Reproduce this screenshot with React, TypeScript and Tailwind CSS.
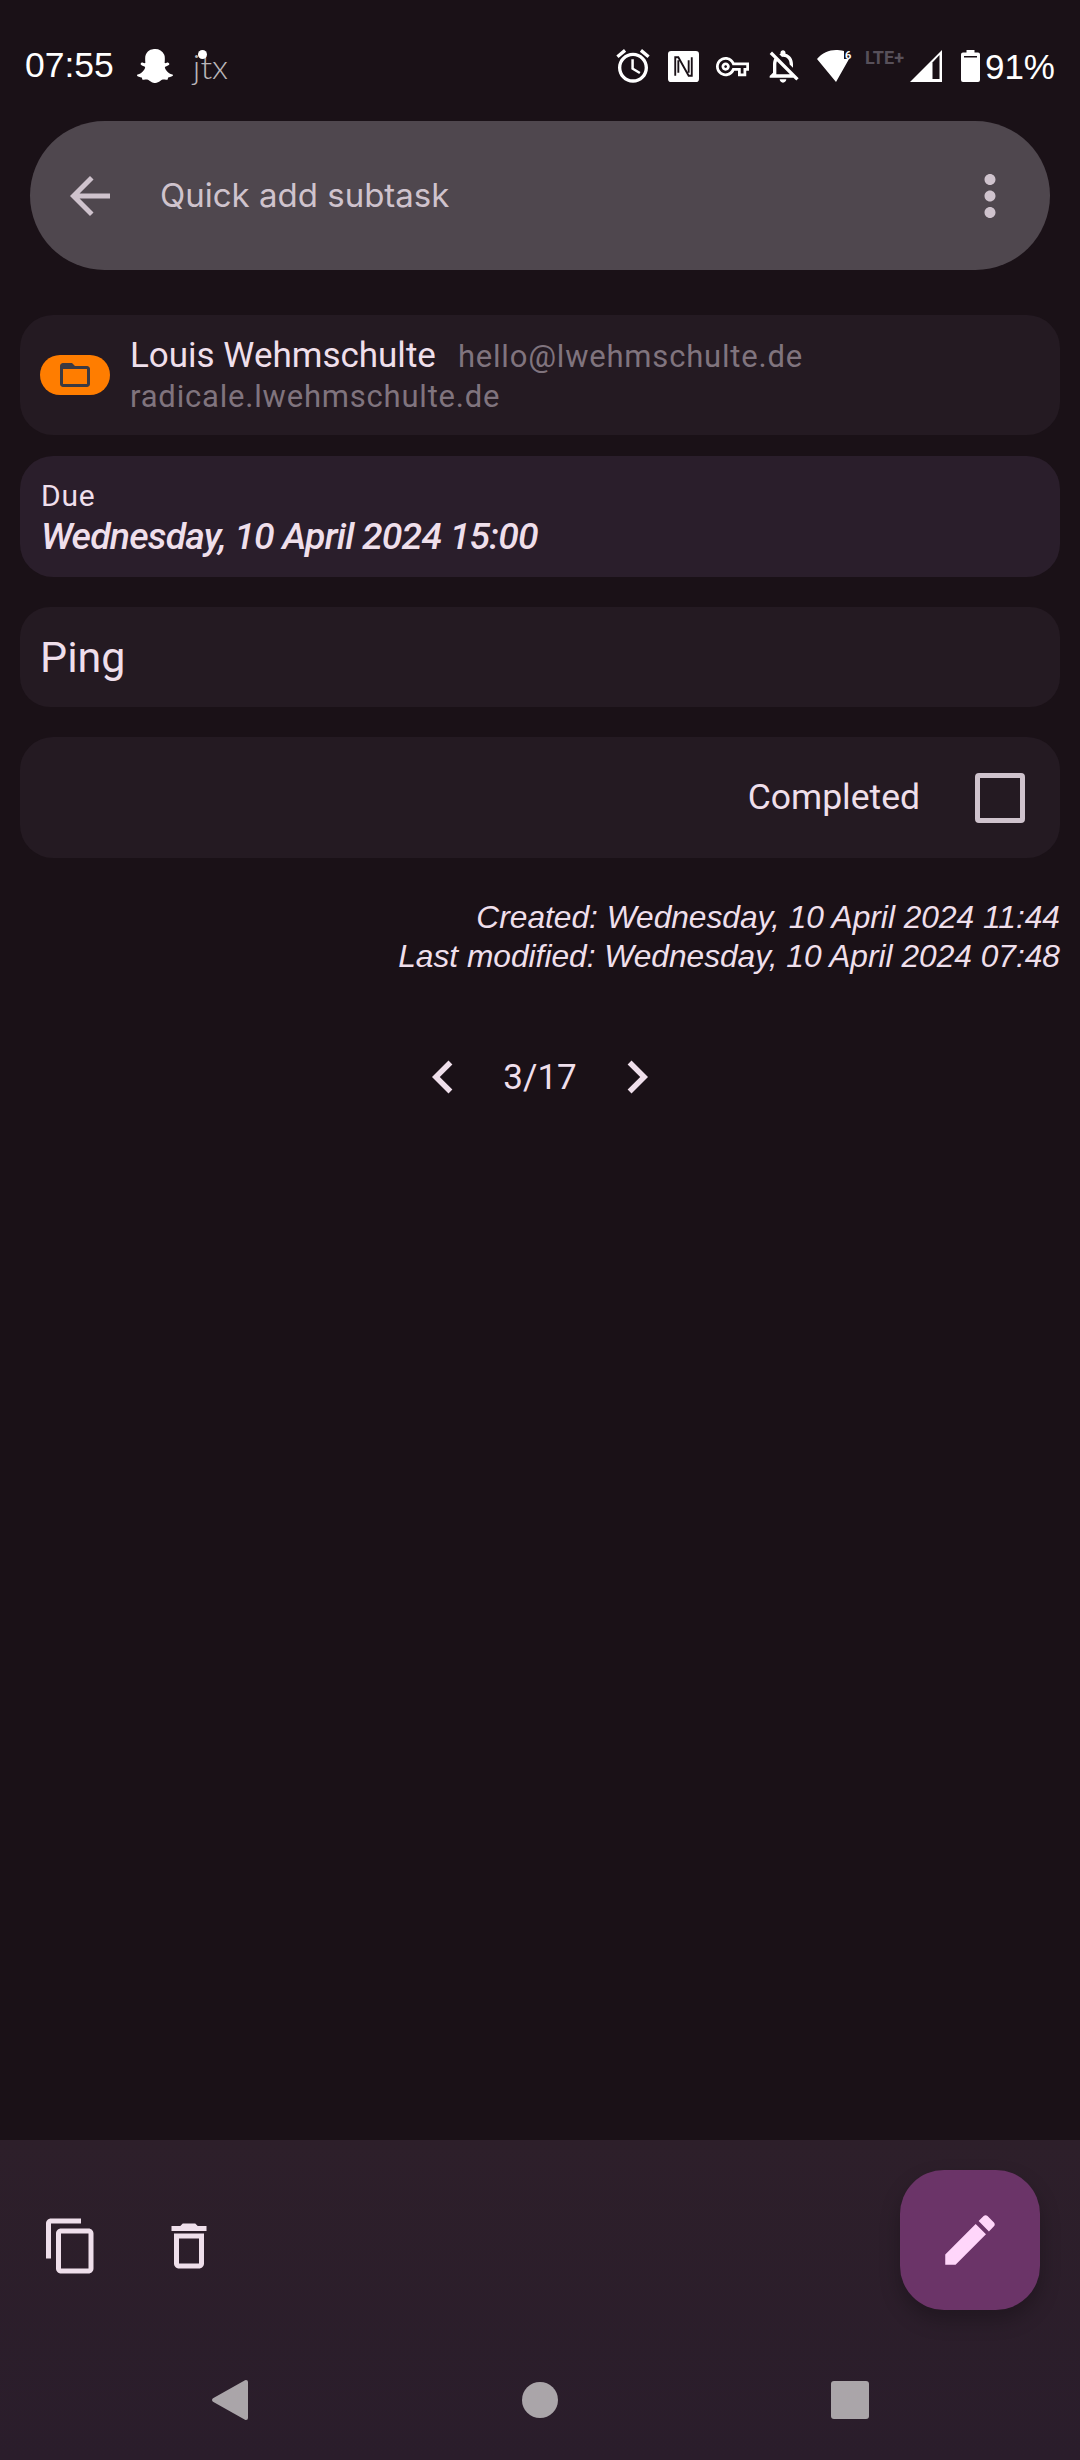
import { FaSnapchatGhost } from 'react-icons/fa';

const roboto = { fontFamily: 'Roboto, sans-serif' };

function Icon({ d, className }: { d: string; className: string }) {
    return (
        <svg viewBox="0 0 24 24" fill="currentColor" className={className}>
            <path d={d} />
        </svg>
    );
}

function StatusBar() {
    return (
        <div className="flex h-[121px] shrink-0 items-center pt-[11px] pl-[25px] pr-[25px] text-white font-['Liberation_Sans',sans-serif]">
            <span className="text-[35.5px] leading-none">07:55</span>
            <FaSnapchatGhost className="ml-[23px] h-[36px] w-[36px]" />
            <span className="relative ml-[20px] font-['Lato',sans-serif] text-[34px] font-light leading-none text-[#b9b5b8]">
                jtx
                <span className="absolute left-[5px] top-[1px] h-[9px] w-[9px] rounded-full bg-white" />
            </span>
            <div className="ml-auto flex items-center">
                <Icon
                    className="h-[40px] w-[40px]"
                    d="M22 5.720l-4.600-3.860-1.290 1.530 4.600 3.860L22 5.720zM7.880 3.390L6.600 1.860 2 5.710l1.290 1.530 4.590-3.850zM12.500 8H11v6l4.750 2.850.75-1.230-4-2.370V8zM12 4c-4.970 0-9 4.030-9 9s4.030 9 9 9 9-4.030 9-9-4.030-9-9-9zm0 16c-3.870 0-7-3.130-7-7s3.130-7 7-7 7 3.130 7 7-3.130 7-7 7z"
                />
                <svg viewBox="0 0 30 30" className="ml-[15px] h-[31px] w-[31px]">
                    <rect x="0" y="0" width="30" height="30" rx="3" fill="#fff" />
                    <path d="M7 24V6h3l10 18h3V6M10 9v12M20 9v12" fill="none" stroke="#1a1117" strokeWidth="1.800" />
                </svg>
                <Icon
                    className="ml-[17px] h-[33px] w-[33px]"
                    d="M22 19h-6v-4h-2.680c-1.140 2.420-3.600 4-6.320 4-3.860 0-7-3.140-7-7s3.140-7 7-7c2.720 0 5.170 1.580 6.320 4H24v6h-2v4zm-4-2h2v-4h2v-2H11.940l-.23-.67C11.010 8.340 9.110 7 7 7c-2.760 0-5 2.240-5 5s2.240 5 5 5c2.110 0 4.010-1.340 4.710-3.330l.23-.67H18v4zM7 15c-1.650 0-3-1.350-3-3s1.350-3 3-3 3 1.350 3 3-1.350 3-3 3zm0-4c-.55 0-1 .45-1 1s.45 1 1 1 1-.45 1-1-.45-1-1-1z"
                />
                <Icon
                    className="ml-[14px] h-[40px] w-[40px]"
                    d="M12 22c1.100 0 2-.9 2-2h-4c0 1.100.9 2 2 2zm0-15.500c2.490 0 4 2.020 4 4.500v.1l2 2V11c0-3.070-1.630-5.640-4.500-6.320V4c0-.83-.67-1.500-1.500-1.500s-1.500.67-1.500 1.500v.68c-.24.06-.47.15-.69.23l1.640 1.640c.18-.02.36-.05.55-.05zM5.410 3.350L4 4.760l2.810 2.810C6.290 8.570 6 9.740 6 11v5l-2 2v1h14.240l1.740 1.740 1.410-1.410L5.410 3.350zM16 17H8v-6c0-.68.12-1.320.34-1.900L16 16.760V17z"
                />
                <svg viewBox="0 0 40 34" className="ml-[14px] h-[34px] w-[40px]">
                    <path d="M0 10C5 4 12 1 19 1c2 0 5 .4 8 1v8h5L19 33z" fill="#fff" />
                    <text x="28" y="10" fontSize="11" fill="#fff" fontFamily="Roboto, sans-serif" fontWeight="700">
                        6
                    </text>
                </svg>
                <span className="mb-[16px] ml-[8px] font-['Roboto',sans-serif] text-[18px] font-bold leading-none text-[#57505a]">
                    LTE+
                </span>
                <svg viewBox="0 0 32 32" className="ml-[6px] h-[32px] w-[32px]">
                    <path d="M32 0v32H0z" fill="#fff" />
                    <path d="M22.500 12.500V29h7V5z" fill="#1a1117" />
                </svg>
                <svg viewBox="0 0 19 32" className="ml-[19px] h-[32px] w-[19px]">
                    <path d="M5.500 0h8v2.500H17a2 2 0 0 1 2 2V30a2 2 0 0 1-2 2H2a2 2 0 0 1-2-2V4.500a2 2 0 0 1 2-2h3.500z" fill="#fff" />
                    <rect x="3" y="6" width="13" height="1.500" fill="#1a1117" />
                </svg>
                <span className="ml-[5px] text-[35px] leading-none">91%</span>
            </div>
        </div>
    );
}

function SearchBar() {
    return (
        <div className="mx-[30px] flex h-[149px] shrink-0 items-center rounded-full bg-[#4f474e] pl-[30px] pr-[27px] text-[#cfc3cd]">
            <Icon className="h-[60px] w-[60px]" d="M20 11H7.830l5.590-5.590L12 4l-8 8 8 8 1.410-1.410L7.830 13H20v-2z" />
            <span className="ml-[40px] font-['Inter',sans-serif] text-[33px] leading-none">Quick add subtask</span>
            <Icon
                className="ml-auto h-[66px] w-[66px]"
                d="M12 8c1.100 0 2-.9 2-2s-.9-2-2-2-2 .9-2 2 .9 2 2 2zm0 2c-1.100 0-2 .9-2 2s.9 2 2 2 2-.9 2-2-.9-2-2-2zm0 6c-1.100 0-2 .9-2 2s.9 2 2 2 2-.9 2-2-.9-2-2-2z"
            />
        </div>
    );
}

function BottomBar() {
    return (
        <div className="mt-auto h-[320px] shrink-0 bg-gradient-to-b from-[#2d1f2a] to-[#2a1d2b] text-[#efdfeb]">
            <div className="flex h-[240px] items-start pl-[41px] pr-[40px] pt-[30px]">
                <Icon
                    className="mt-[46px] h-[60px] w-[60px]"
                    d="M16 1H4c-1.100 0-2 .9-2 2v14h2V3h12V1zm3 4H8c-1.100 0-2 .9-2 2v14c0 1.100.9 2 2 2h11c1.100 0 2-.9 2-2V7c0-1.100-.9-2-2-2zm0 16H8V7h11v14z"
                />
                <Icon
                    className="ml-[58px] mt-[46px] h-[60px] w-[60px]"
                    d="M16 9v10H8V9h8m-1.500-6h-5l-1 1H5v2h14V4h-3.500l-1-1zM18 7H6v12c0 1.100.9 2 2 2h8c1.100 0 2-.9 2-2V7z"
                />
                <div className="ml-auto flex h-[140px] w-[140px] items-center justify-center rounded-[44px] bg-[#6b3468] text-[#ffd6fa] shadow-[0_10px_20px_rgba(0,0,0,0.25)]">
                    <Icon
                        className="h-[66px] w-[66px]"
                        d="M3 17.250V21h3.750L17.810 9.940l-3.750-3.750L3 17.250zM20.710 7.040c.39-.39.39-1.020 0-1.410l-2.340-2.340c-.39-.39-1.020-.39-1.410 0l-1.830 1.830 3.750 3.750 1.830-1.830z"
                    />
                </div>
            </div>
            <div className="flex h-[40px] items-center pl-[75px]">
                <div className="flex w-[309px] justify-center">
                    <svg viewBox="0 0 36 40" className="h-[40px] w-[36px]">
                        <path d="M34 0a2 2 0 0 1 2 2v36a2 2 0 0 1-2 2 2 2 0 0 1-1-.3L1 21.700a2 2 0 0 1 0-3.400L33 .3A2 2 0 0 1 34 0z" fill="#aaa5a9" />
                    </svg>
                </div>
                <div className="flex w-[311px] justify-center">
                    <div className="h-[36px] w-[36px] rounded-full bg-[#aaa5a9]" />
                </div>
                <div className="flex w-[309px] justify-center">
                    <div className="h-[38px] w-[38px] rounded-[3px] bg-[#aaa5a9]" />
                </div>
            </div>
        </div>
    );
}

export default function App() {
    return (
        <div className="flex h-[2460px] w-[1080px] flex-col overflow-hidden bg-[#1a1117] text-[#efdfeb]" style={roboto}>
            <StatusBar />
            <SearchBar />

            <div className="mx-[20px] mt-[45px] flex h-[120px] shrink-0 items-center rounded-[33px] bg-[#241a22] pl-[20px]">
                <div className="flex h-[40px] w-[70px] items-center justify-center rounded-[20px] bg-[#ff7d00] text-[#3b3a42]">
                    <Icon
                        className="h-[36px] w-[36px]"
                        d="M20 6h-8l-2-2H4c-1.100 0-1.990.9-1.990 2L2 18c0 1.100.9 2 2 2h16c1.100 0 2-.9 2-2V8c0-1.100-.9-2-2-2zm0 12H4V8h16v10z"
                    />
                </div>
                <div className="ml-[20px] flex flex-col">
                    <div className="flex items-baseline">
                        <span className="text-[35px] leading-[42px]">Louis Wehmschulte</span>
                        <span className="ml-[22px] text-[31px] leading-[42px] tracking-[0.8px] text-[#80747e]">hello@lwehmschulte.de</span>
                    </div>
                    <span className="text-[31px] leading-[38px] tracking-[0.8px] text-[#80747e]">radicale.lwehmschulte.de</span>
                </div>
            </div>

            <div className="mx-[20px] mt-[21px] flex h-[121px] shrink-0 flex-col justify-center rounded-[33px] bg-[#2a1e2b] pl-[21px]">
                <span className="text-[30px] leading-[38px] tracking-[0.8px]">Due</span>
                <span className="text-[37.4px] font-medium italic leading-[42px] tracking-[-0.8px]">Wednesday, 10 April 2024 15:00</span>
            </div>

            <div className="mx-[20px] mt-[30px] flex h-[100px] shrink-0 items-center rounded-[30px] bg-[#241a22] pl-[20px]">
                <span className="text-[43px] leading-none">Ping</span>
            </div>

            <div className="mx-[20px] mt-[30px] flex h-[121px] shrink-0 items-center justify-end rounded-[33px] bg-[#241a22] pr-[35px]">
                <span className="text-[35.5px] leading-none">Completed</span>
                <div className="ml-[55px] h-[50px] w-[50px] rounded-[4px] border-[5px] border-[#cfc3cd]" />
            </div>

            <div className="mx-[20px] mt-[40px] flex flex-col items-end font-['Liberation_Sans',sans-serif] text-[31.7px] italic leading-[39px]">
                <span>Created: Wednesday, 10 April 2024 11:44</span>
                <span>Last modified: Wednesday, 10 April 2024 07:48</span>
            </div>

            <div className="mt-[68px] flex items-center justify-center">
                <Icon className="h-[66px] w-[66px]" d="M15.410 7.410L14 6l-6 6 6 6 1.410-1.410L10.830 12z" />
                <span className="mx-[27px] text-[35px] leading-none">3/17</span>
                <Icon className="h-[66px] w-[66px]" d="M10 6L8.590 7.410 13.170 12l-4.580 4.590L10 18l6-6z" />
            </div>

            <BottomBar />
        </div>
    );
}
